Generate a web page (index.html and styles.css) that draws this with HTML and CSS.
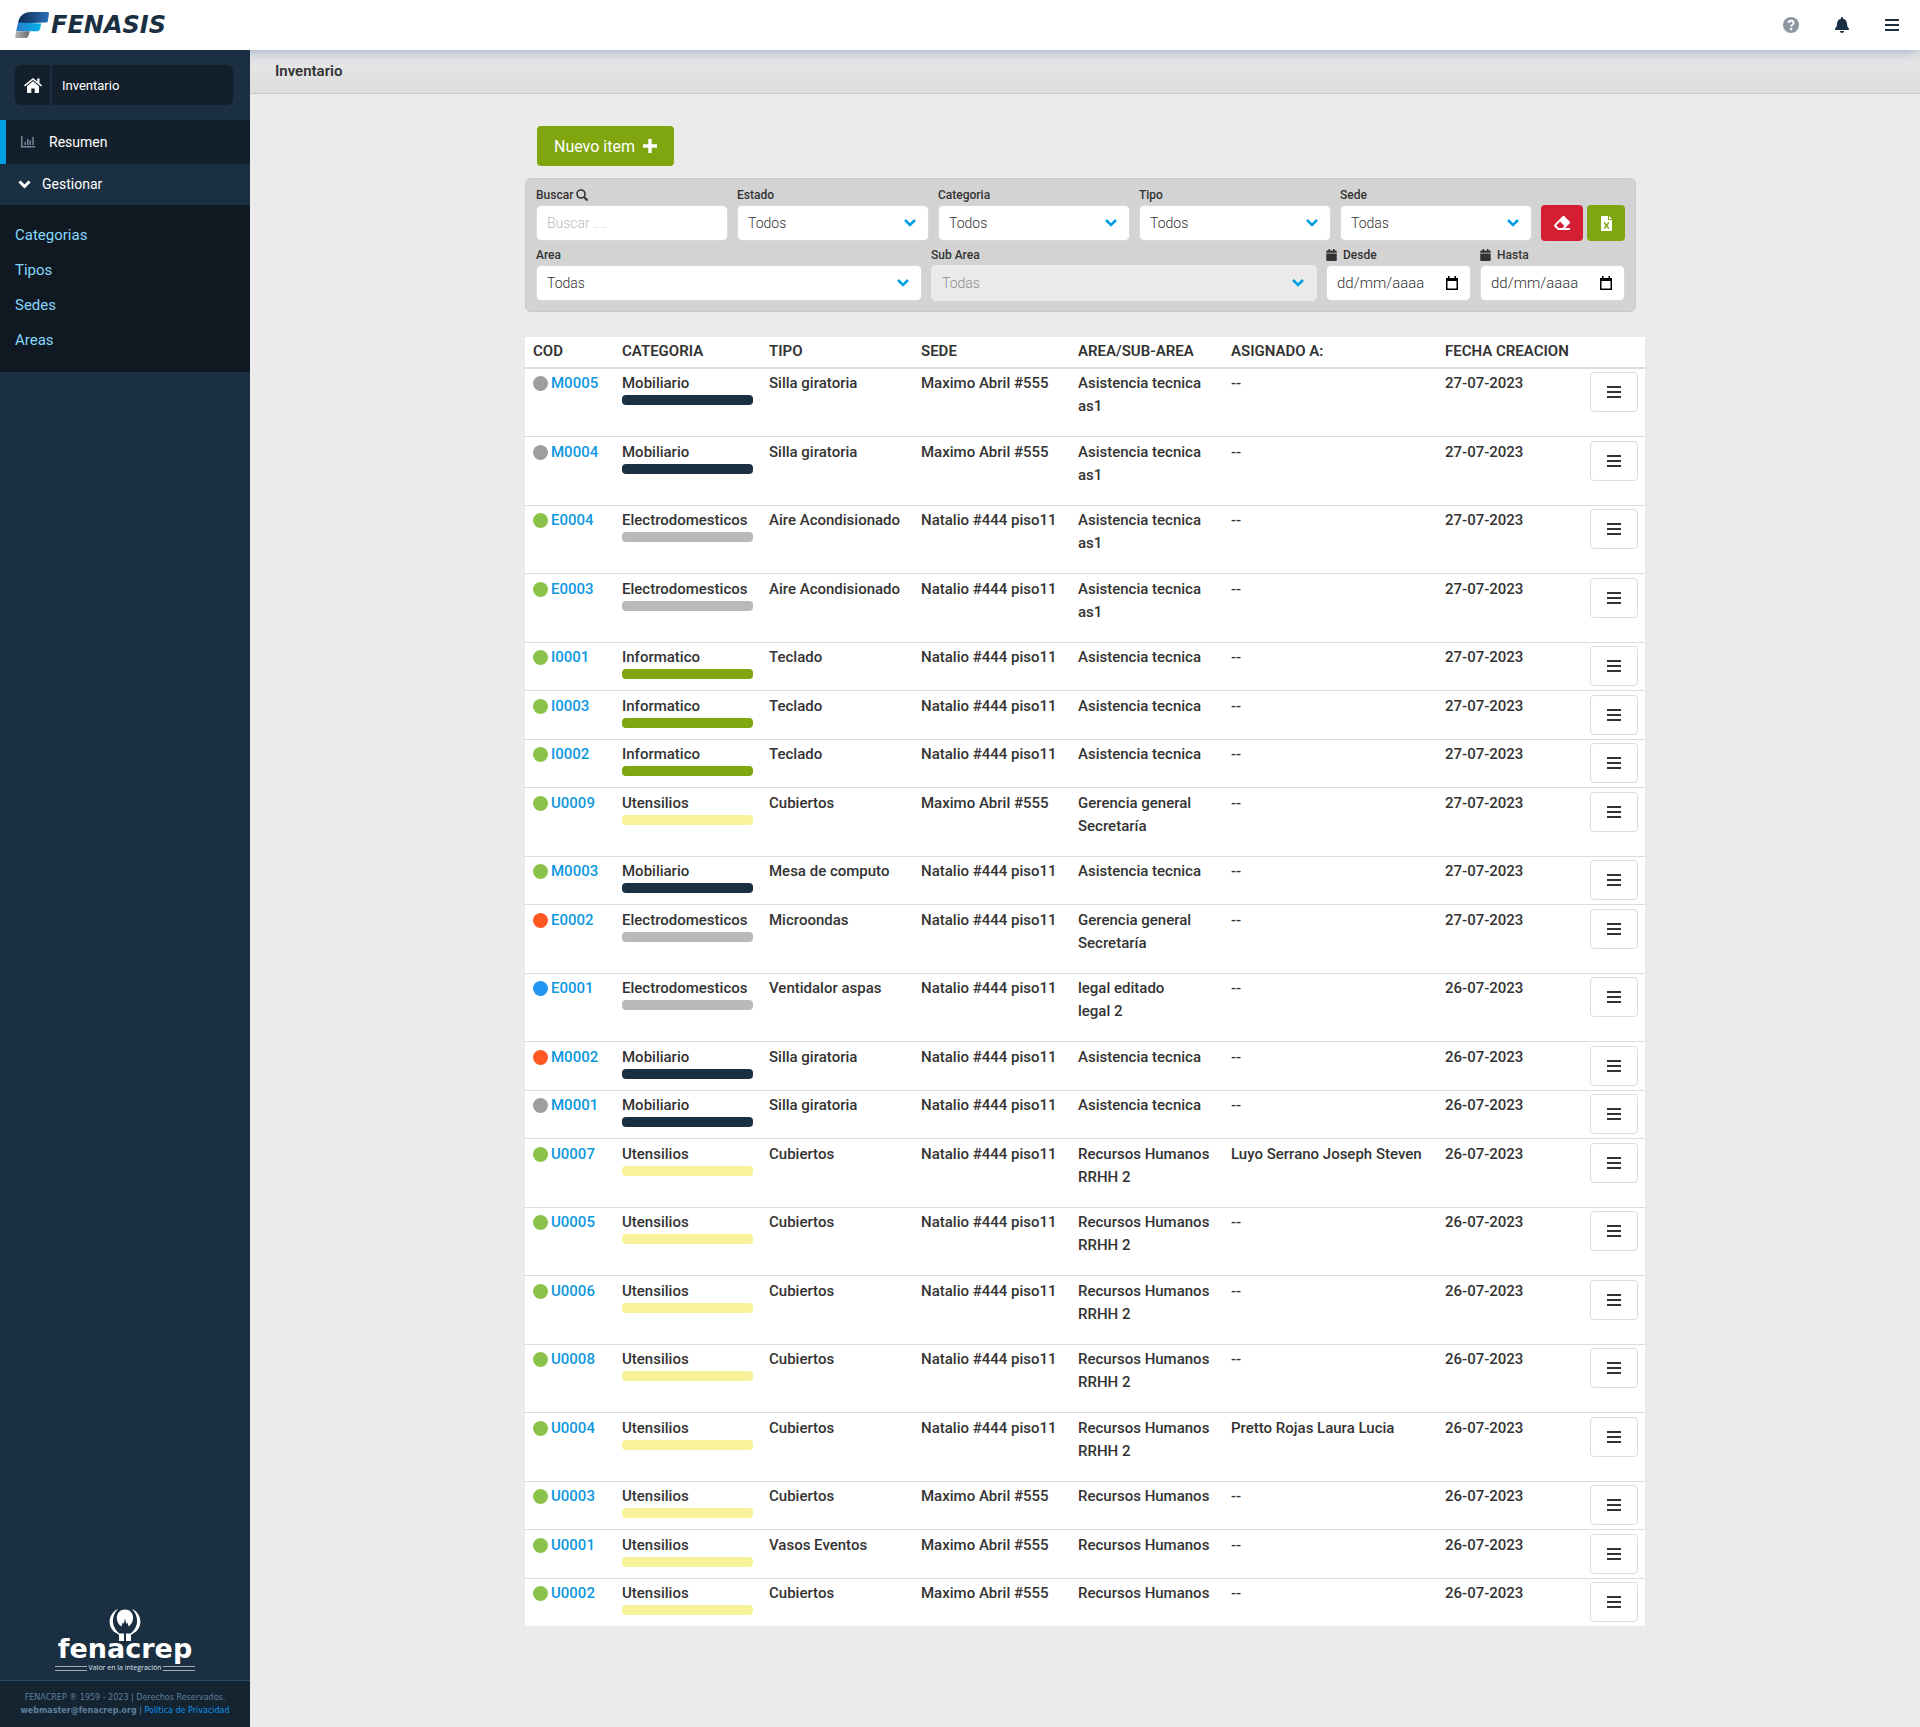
FILE: index.html
```html
<!DOCTYPE html>
<html lang="es">
<head>
<meta charset="utf-8">
<meta name="viewport" content="width=device-width, initial-scale=1">
<title>Fenasis - Inventario</title>
<link rel="stylesheet" href="styles.css">
</head>
<body>
<svg class="sprite" aria-hidden="true">
  <symbol id="bars" viewBox="0 0 14 12"><path d="M0 0h14v2H0zM0 5h14v2H0zM0 10h14v2H0z"/></symbol>
  <symbol id="calendar" viewBox="0 0 448 512"><path d="M0 464c0 26.500 21.500 48 48 48h352c26.500 0 48-21.500 48-48V192H0v272zM400 64h-48V16c0-8.800-7.200-16-16-16h-32c-8.800 0-16 7.200-16 16v48H160V16c0-8.800-7.200-16-16-16h-32c-8.800 0-16 7.200-16 16v48H48C21.500 64 0 85.500 0 112v48h448v-48c0-26.500-21.500-48-48-48z"/></symbol>
  <symbol id="picker" viewBox="0 0 12 14"><path d="M0 2h2V0h1.500v2h5V0H10v2h2v12H0zM1.500 5v7.500h9V5z" fill-rule="evenodd"/></symbol>
</svg>
<header class="topbar">
  <a class="brand" href="#" aria-label="Fenasis">
    <svg class="brand-mark" viewBox="0 0 36 28" aria-hidden="true">
      <defs>
        <linearGradient id="g1" x2="1"><stop stop-color="#0d2a52"/><stop offset="1" stop-color="#2a72b8"/></linearGradient>
        <linearGradient id="g2" x2="1"><stop stop-color="#2b7cc9"/><stop offset="1" stop-color="#00b4ee"/></linearGradient>
        <linearGradient id="g3" x2="1"><stop stop-color="#b5b5b5"/><stop offset="1" stop-color="#6a6a6a"/></linearGradient>
      </defs>
      <path d="M3 12C4 4 9 0 16 0h18q1.500 0 1 2l-1 7q0 2-3 2z" fill="url(#g1)"/>
      <path d="M3 11l24 1-1 5q-1 3-4 3H1z" fill="url(#g2)"/>
      <path d="M1 20h14l-1 4q-1 3-4 3H0z" fill="url(#g3)"/>
    </svg>
    <span class="brand-name">FENASIS</span>
  </a>
  <nav class="tools" aria-label="Herramientas">
    <button class="tool tool-muted" type="button" aria-label="Ayuda"><svg width="16" height="16" viewBox="0 0 16 16"><circle cx="8" cy="8" r="8"/><path d="M5.500 6C5.700 3 10.600 3 10.600 6c0 1.800-2.500 1.700-2.500 3.500" fill="none" stroke="#fff" stroke-width="2"/><circle cx="8.100" cy="12" r="1.300" fill="#fff"/></svg></button>
    <button class="tool" type="button" aria-label="Notificaciones"><svg width="14" height="16" viewBox="0 0 448 512"><path d="M224 512c35.300 0 64-28.700 64-64H160c0 35.300 28.600 64 64 64zm215.400-149.700c-19.300-20.800-55.500-52-55.500-154.300 0-77.700-54.500-139.900-127.900-155.200V32c0-17.700-14.300-32-32-32s-32 14.300-32 32v20.800C118.600 68.100 64.100 130.300 64.100 208c0 102.300-36.200 133.500-55.500 154.300C2.600 368.700 0 376.400 0 384c.1 16.400 13 32 32.100 32h383.800c19.100 0 32-15.600 32.100-32 0-7.600-2.600-15.300-8.600-21.700z"/></svg></button>
    <button class="tool" type="button" aria-label="Menú"><svg width="14" height="12"><use href="#bars"/></svg></button>
  </nav>
</header>
<div class="shell">
  <aside class="sidebar">
    <div class="crumb">
      <a class="crumb-home" href="#" aria-label="Inicio"><svg width="18" height="15" viewBox="0 0 18 15"><path d="M9 3.200l6 5V14q0 1-1 1h-3.300v-4.500H7.300V15H4q-1 0-1-1V8.200z"/><path d="M9 0L0 7.300l1 1.300 8-6.600 8 6.600 1-1.300-2.500-2V.600h-2.300v2.800z"/></svg></a>
      <a class="crumb-page" href="#">Inventario</a>
    </div>
    <nav aria-label="Principal">
      <a class="menu-item menu-item-active" href="#"><svg width="14" height="12" viewBox="0 0 14 12"><path d="M0 0h1.500v10H14v1.500H0zM3.500 6H5v3H3.500zM6 3h1.500v6H6zM8.500 4.500H10V9H8.500zM11.300 1h1.500v8h-1.500z"/></svg>Resumen</a>
      <button class="menu-item menu-toggle" type="button" aria-expanded="true"><svg width="13" height="9" viewBox="0 0 13 9"><path d="M1.500 1.500l5 5 5-5" fill="none" stroke="#fff" stroke-width="3"/></svg>Gestionar</button>
      <div class="submenu">
        <a href="#">Categorias</a>
        <a href="#">Tipos</a>
        <a href="#">Sedes</a>
        <a href="#">Areas</a>
      </div>
    </nav>
    <div class="company">
      <svg width="32" height="32" viewBox="0 0 32 32" aria-hidden="true"><path d="M12.300 17.500C5 12 7 .500 16 .500s11 11.500 3.700 17l-1.400-4-1 1.500L16 9.500 14.700 15l-1-1.500z" fill="#fff"/><path d="M9 0C-2 5-2 20 8 24.500l2 1.500v6h5v-7.500h-4.500C2 18 2 7 9 0zM23 0c11 5 11 20 1 24.500L22 26v6h-5v-7.500h4.500C30 18 30 7 23 0z" fill="#fff"/></svg>
      <span class="company-name">fenacrep</span>
      <span class="company-motto">Valor en la integración</span>
    </div>
    <footer class="legal">
      <p>FENACREP ® 1959 - 2023 | Derechos Reservados.</p>
      <p><strong>webmaster@fenacrep.org</strong> | <a href="#">Política de Privacidad</a></p>
    </footer>
  </aside>
  <main class="main">
    <h1 class="page-title">Inventario</h1>
    <div class="content">
      <button class="new-item" type="button">Nuevo item <svg width="14" height="14" viewBox="0 0 14 14"><path d="M5.300 0h3.400v5.300H14v3.400H8.700V14H5.300V8.700H0V5.300h5.300z"/></svg></button>
      <form class="filters">
        <div class="filter-row">
          <div class="field"><label for="f-q">Buscar <svg width="12" height="12" viewBox="0 0 12 12"><circle cx="5" cy="5" r="4" fill="none" stroke="#333" stroke-width="1.600"/><path d="M8 8l3.500 3.500" stroke="#333" stroke-width="2"/></svg></label><input id="f-q" type="text" placeholder="Buscar ...."></div>
          <div class="field"><label for="f-estado">Estado</label><select id="f-estado"><option>Todos</option></select></div>
          <div class="field"><label for="f-cat">Categoria</label><select id="f-cat"><option>Todos</option></select></div>
          <div class="field"><label for="f-tipo">Tipo</label><select id="f-tipo"><option>Todos</option></select></div>
          <div class="field"><label for="f-sede">Sede</label><select id="f-sede"><option>Todas</option></select></div>
          <div class="actions">
            <button class="action action-clear" type="reset" aria-label="Limpiar"><svg width="16" height="14" viewBox="0 0 512 448"><path d="M497.900 241.900c18.800-18.700 18.800-49.100 0-67.900l-160-160c-18.700-18.700-49.100-18.700-67.900 0l-256 256c-18.700 18.700-18.700 49.100 0 67.900l96 96A48 48 0 0 0 144 448h356c6.600 0 12-5.400 12-12v-40c0-6.600-5.400-12-12-12H355.900l142-142.100zM195.300 179.300l137.400 137.400L265.400 384H150.600l-80-80 124.700-124.700z"/></svg></button>
            <button class="action action-excel" type="button" aria-label="Exportar a Excel"><svg width="11" height="15" viewBox="0 0 11 15"><path d="M0 1q0-1 1-1h6v4h4v10q0 1-1 1H1q-1 0-1-1zM8 0l3 3H8z"/><path d="M3.200 6.500l4.600 6M7.800 6.500l-4.600 6" stroke="#7fa60f" stroke-width="1.300"/></svg></button>
          </div>
        </div>
        <div class="filter-row">
          <div class="field"><label for="f-area">Area</label><select id="f-area"><option>Todas</option></select></div>
          <div class="field"><label for="f-sub">Sub Area</label><select id="f-sub" disabled><option>Todas</option></select></div>
          <div class="field field-date"><label for="f-desde"><svg class="cal" width="11" height="12"><use href="#calendar"/></svg>Desde</label><div class="date"><input id="f-desde" type="text" placeholder="dd/mm/aaaa"><button type="button" aria-label="Elegir fecha desde"><svg width="12" height="14"><use href="#picker"/></svg></button></div></div>
          <div class="field field-date"><label for="f-hasta"><svg class="cal" width="11" height="12"><use href="#calendar"/></svg>Hasta</label><div class="date"><input id="f-hasta" type="text" placeholder="dd/mm/aaaa"><button type="button" aria-label="Elegir fecha hasta"><svg width="12" height="14"><use href="#picker"/></svg></button></div></div>
        </div>
      </form>
      <table class="items">
        <colgroup><col class="c-cod"><col class="c-cat"><col class="c-tipo"><col class="c-sede"><col class="c-area"><col class="c-asig"><col class="c-fecha"><col class="c-menu"></colgroup>
        <thead><tr><th>COD</th><th>CATEGORIA</th><th>TIPO</th><th>SEDE</th><th>AREA/SUB-AREA</th><th>ASIGNADO A:</th><th>FECHA CREACION</th><th></th></tr></thead>
        <tbody id="rows"></tbody>
      </table>
    </div>
  </main>
</div>
<script src="rows.js"></script>
</body>
</html>
```
FILE: rows.js
```js
// code | status | category | type | site | area | sub-area | assignee | date
const items = `
M0005|gray|Mobiliario|Silla giratoria|Maximo Abril #555|Asistencia tecnica|as1|--|27-07-2023
M0004|gray|Mobiliario|Silla giratoria|Maximo Abril #555|Asistencia tecnica|as1|--|27-07-2023
E0004|green|Electrodomesticos|Aire Acondisionado|Natalio #444 piso11|Asistencia tecnica|as1|--|27-07-2023
E0003|green|Electrodomesticos|Aire Acondisionado|Natalio #444 piso11|Asistencia tecnica|as1|--|27-07-2023
I0001|green|Informatico|Teclado|Natalio #444 piso11|Asistencia tecnica||--|27-07-2023
I0003|green|Informatico|Teclado|Natalio #444 piso11|Asistencia tecnica||--|27-07-2023
I0002|green|Informatico|Teclado|Natalio #444 piso11|Asistencia tecnica||--|27-07-2023
U0009|green|Utensilios|Cubiertos|Maximo Abril #555|Gerencia general|Secretaría|--|27-07-2023
M0003|green|Mobiliario|Mesa de computo|Natalio #444 piso11|Asistencia tecnica||--|27-07-2023
E0002|red|Electrodomesticos|Microondas|Natalio #444 piso11|Gerencia general|Secretaría|--|27-07-2023
E0001|blue|Electrodomesticos|Ventidalor aspas|Natalio #444 piso11|legal editado|legal 2|--|26-07-2023
M0002|red|Mobiliario|Silla giratoria|Natalio #444 piso11|Asistencia tecnica||--|26-07-2023
M0001|gray|Mobiliario|Silla giratoria|Natalio #444 piso11|Asistencia tecnica||--|26-07-2023
U0007|green|Utensilios|Cubiertos|Natalio #444 piso11|Recursos Humanos|RRHH 2|Luyo Serrano Joseph Steven|26-07-2023
U0005|green|Utensilios|Cubiertos|Natalio #444 piso11|Recursos Humanos|RRHH 2|--|26-07-2023
U0006|green|Utensilios|Cubiertos|Natalio #444 piso11|Recursos Humanos|RRHH 2|--|26-07-2023
U0008|green|Utensilios|Cubiertos|Natalio #444 piso11|Recursos Humanos|RRHH 2|--|26-07-2023
U0004|green|Utensilios|Cubiertos|Natalio #444 piso11|Recursos Humanos|RRHH 2|Pretto Rojas Laura Lucia|26-07-2023
U0003|green|Utensilios|Cubiertos|Maximo Abril #555|Recursos Humanos||--|26-07-2023
U0001|green|Utensilios|Vasos Eventos|Maximo Abril #555|Recursos Humanos||--|26-07-2023
U0002|green|Utensilios|Cubiertos|Maximo Abril #555|Recursos Humanos||--|26-07-2023`.trim().split("\n");

document.getElementById("rows").innerHTML = items.map((line) => {
  const [code, status, category, type, site, area, sub, person, date] = line.split("|");
  return `<tr>
    <td><a class="code" href="#"><span class="dot dot-${status}"></span>${code}</a></td>
    <td>${category}<span class="bar bar-${category.toLowerCase()}"></span></td>
    <td>${type}</td>
    <td>${site}</td>
    <td>${area}${sub ? `<span class="sub">${sub}</span>` : ""}</td>
    <td>${person}</td>
    <td>${date}</td>
    <td><button class="row-menu" type="button" aria-label="Opciones de ${code}"><svg width="14" height="12"><use href="#bars"/></svg></button></td>
  </tr>`;
}).join("");
```
FILE: styles.css
```css
* { box-sizing: border-box; }

body {
  margin: 0;
  min-height: 100vh;
  display: flex;
  flex-direction: column;
  background: #ebebeb;
  color: #333;
  font: 15px/23px Roboto, "Liberation Sans", sans-serif;
}

a { color: inherit; text-decoration: none; }
button, input, select { font: inherit; color: inherit; margin: 0; }
button { border: 0; background: none; padding: 0; cursor: pointer; }
svg { fill: currentColor; flex: none; }
.sprite { display: none; }

.topbar {
  position: relative;
  z-index: 1;
  height: 50px;
  display: flex;
  align-items: center;
  justify-content: space-between;
  padding: 0 21px 0 15px;
  background: #fff;
  color: #1b2f42;
  box-shadow: 0 0 14px #8a9bb5;
}
.brand { display: flex; align-items: center; gap: 1px; }
.brand-mark { width: 35px; height: 27px; }
.brand-name { font: italic bold 24px/24px "DejaVu Sans", sans-serif; }
.tools { display: flex; gap: 36px; }
.tool { display: flex; align-items: center; justify-content: center; }
.tool-muted { color: #8b96a2; }

.shell { flex: 1; display: flex; }

.sidebar {
  flex: none;
  width: 250px;
  display: flex;
  flex-direction: column;
  position: relative;
  z-index: 2;
  background: #1b2f42;
  color: #fff;
}
.crumb { display: flex; gap: 2px; margin: 15px 17px 15px 15px; height: 40px; font-size: 13px; }
.crumb a { display: flex; align-items: center; background: #131f2a; }
.crumb-home { width: 35px; justify-content: center; border-radius: 6px 0 0 6px; }
.crumb-page { flex: 1; padding-left: 10px; border-radius: 0 6px 6px 0; }
.menu-item { display: flex; align-items: center; width: 100%; font-size: 14px; }
.menu-item-active { height: 44px; gap: 14px; padding-left: 15px; border-left: 6px solid #009fe3; background: #131f2a; }
.menu-item-active svg { color: #71879a; }
.menu-toggle { height: 41px; gap: 11px; padding-left: 18px; }
.submenu { display: flex; flex-direction: column; padding: 13px 15px 14px; background: #101922; color: #86d8fa; }
.submenu a { line-height: 35px; }

.company { margin: auto auto 6px; display: flex; flex-direction: column; align-items: center; }
.company-name { font: bold 27px/26px "DejaVu Sans", sans-serif; margin-top: -5px; }
.company-motto { display: flex; align-items: center; gap: 2px; width: 140px; font: 7px/12px "Open Sans", sans-serif; white-space: nowrap; color: #dfe4e8; }
.company-motto::before, .company-motto::after { content: ""; flex: 1; height: 3px; border: 1px solid #a4adb6; border-width: 1px 0; }

.legal { height: 47px; padding-top: 10px; border-top: 1px solid #2a4765; background: #142430; color: #5f7f9e; text-align: center; font: 8px/13px "DejaVu Sans", sans-serif; }
.legal p { margin: 0; }
.legal a { color: #0d93ea; }

.main { flex: 1; min-width: 0; }
.page-title { margin: 0; height: 44px; padding: 0 25px; border-bottom: 1px solid #c8c8c8; background: linear-gradient(#ebebeb, #dcdcdc); font-size: 15px; font-weight: 600; line-height: 42px; }
.content { max-width: 1120px; margin: 32px auto 100px; }

.new-item { display: flex; align-items: center; gap: 8px; height: 40px; margin: 0 0 12px 12px; padding: 0 17px; border-radius: 4px; background: #7fa60f; color: #fff; font-size: 16px; }

.filters { display: flex; flex-direction: column; gap: 4px; margin: 0 9px 25px 0; padding: 6px 10px 10px; border: 1px solid #c9c9c9; border-radius: 6px; background: #d3d3d3; }
.filter-row { display: flex; gap: 9px; align-items: flex-end; }
.field { flex: 1; min-width: 0; }
.field-date { flex: 0 0 145px; }
.field label { display: flex; align-items: center; gap: 3px; font-size: 12px; font-weight: 500; line-height: 20px; }
.field .cal { margin-right: 3px; }
.field input, .field select { display: block; width: 100%; height: 36px; padding: 0 10px; border: 1px solid #d9d9d9; border-radius: 5px; background: #fff; font-size: 14px; font-weight: 300; outline: 0; }
.field select {
  appearance: none;
  background: #fff url("data:image/svg+xml,%3Csvg xmlns='http://www.w3.org/2000/svg' width='12' height='8'%3E%3Cpath d='M1 1l5 5 5-5' fill='none' stroke='%23009fe3' stroke-width='2.500'/%3E%3C/svg%3E") no-repeat right 12px center;
}
.field select:disabled { background-color: #ebebeb; border-color: #ebebeb; color: #8c8c8c; opacity: 1; }
.field input::placeholder { color: #bbb; opacity: 1; }
.date { position: relative; }
.field .date input { font-size: 15px; }
.date input::placeholder { color: #333; }
.date button { position: absolute; top: 0; right: 13px; height: 36px; display: flex; align-items: center; color: #000; }
.actions { display: flex; gap: 4px; }
.action { display: flex; align-items: center; justify-content: center; height: 36px; border-radius: 4px; color: #fff; }
.action-clear { width: 42px; background: #d41f33; }
.action-excel { width: 38px; background: #7fa60f; }

.items { width: 100%; table-layout: fixed; border-spacing: 0; background: #fff; font-weight: 500; }
.c-cod { width: 89px; }
.c-cat { width: 147px; }
.c-tipo { width: 152px; }
.c-sede { width: 157px; }
.c-area { width: 153px; }
.c-fecha { width: 145px; }
.c-menu { width: 63px; }
.items th, .items td { padding: 3px 8px 4px; text-align: left; vertical-align: top; white-space: nowrap; }
.items th { font-weight: 600; border-bottom: 2px solid #dcdcdc; }
.items td { border-bottom: 1px solid #dcdcdc; }
.items tbody tr:last-child td { border-bottom: 0; }
.items tbody tr:nth-child(even) td { padding-top: 4px; }
.code { display: flex; align-items: center; gap: 3px; color: #0d98e0; }
.dot { width: 15px; height: 15px; border-radius: 50%; }
.dot-gray { background: #9e9e9e; }
.dot-green { background: #8bc34a; }
.dot-red { background: #ff5722; }
.dot-blue { background: #2196f3; }
.bar { display: block; height: 10px; border-radius: 4px; }
.bar-mobiliario { background: #1b2f42; }
.bar-electrodomesticos { background: #b9b9b9; }
.bar-informatico { background: #7fa60f; }
.bar-utensilios { background: #f8f29a; }
.sub { display: block; margin-bottom: 14px; }
.row-menu { display: flex; align-items: center; justify-content: center; width: 48px; height: 40px; border: 1px solid #dcdcdc; border-radius: 4px; background: #fff; }
```
